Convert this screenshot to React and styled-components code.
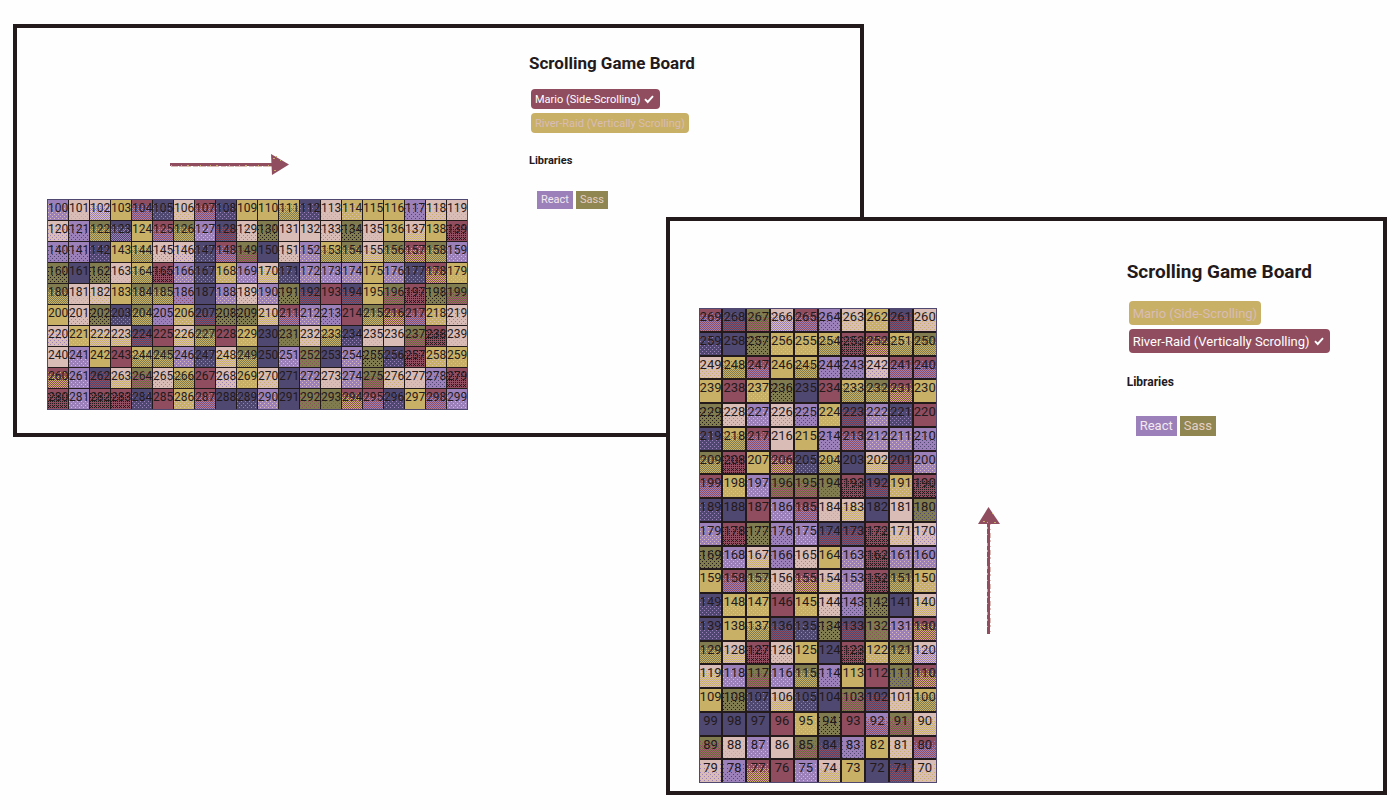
import React from "react";
import styled, { createGlobalStyle, css } from "styled-components";

const palette = {
  b: "#231a1c",
  n: "#4f4870",
  w: "#8f4d5f",
  o: "#817b50",
  g: "#c8b067",
  p: "#9b80ba",
  k: "#d9bcb6",
};

/* Each cell is a base colour and the colour of its grain; a capital means a dense grain. */
const sideTiles = [
  "pk kg kP g- wP np kg wP np g- g- gO np kg gk g- g- pn kg kg",
  "kp pn oG nP g- wP oG pk nW kp ob k- k- kp ob kg g- kG g- wB",
  "pn pn np g- gO kp kp np wP oW n- kp pk gO oG kG oG wG oG pk",
  "ob n- ob kg gO wB pk np gk pk kG np pk pk pk g- pk np wG gk",
  "oG kg kg g- oG oG pw n- pk kp pk ob nW w- nW g- oW wB ob oW",
  "g- kp ob np oG pw gk nW ob ob kG wP pk pn w- oG wG wP gk kp",
  "kp gk kG kG nW w- kG oG w- gk n- on kg gO np kg k- oW wB kg",
  "k- pk g- w- gO oG pk np kG oG n- pk ow n- pk ob np wB gk gk",
  "wG pk nW kG oW kp gO w- kp gk kg n- pk kg pk oW kg kg pn wB",
  "wB pk wB wB np w- gk wP n- np pk n- ow ow wG wP np g- wP pk",
];

const upTiles = [
  "wP nW oW kP wP pn kg gk nW kg",
  "np n- ob gk gk gO wB wG gO oG",
  "kg gO wP g- gO pn pn kp wP wP",
  "g- w- gk ob n- w- gO oG wG g-",
  "ob kp pk kp pn gk nW pk np w-",
  "np gO wP k- g- pn wP pk pk pn",
  "oG wB g- wG np gO n- kG nW pk",
  "wP gk pk oW oW on wB nW gk wB",
  "np n- w- pk wP kg kG n- k- on",
  "pk wB ob pn pk nW nW wB kg kp",
  "ob pk kG pn kp g- pk wB pk pk",
  "g- wP oG kp wG kG pk wB oG gk",
  "np gk gk w- gk kp pn ob n- kG",
  "np g- gO nW np ob nW ow pk wG",
  "oG kG wB kp g- n- wB gk oG kP",
  "kG pk oW pk oG pn g- w- on wG",
  "g- ob np kG np n- oW nW kg gO",
  "n- n- n- w- gk ob w- pW oW kG",
  "oW kg pk k- oW nW pn g- kg wP",
  "kp pn wG w- pk kG g- n- nW kg",
];

const parse = (rows, first, step) =>
  rows
    .join(" ")
    .split(" ")
    .map((code, i) => {
      const [base, grain] = code;
      return {
        number: first + i * step,
        base: palette[base],
        grain: palette[grain.toLowerCase()],
        dense: grain !== grain.toLowerCase(),
      };
    });

/* Ordered 4x4 dithering that thickens towards the foot of the cell. */
const bayer = [0, 8, 2, 10, 12, 4, 14, 6, 3, 11, 1, 9, 15, 7, 13, 5];

const grainPath = (density) => {
  let d = "";
  for (let y = 3; y < 23; y += 1) {
    const level = density * Math.min(1, y / 15);
    for (let x = 0; x < 23; x += 1) {
      if (bayer[(y % 4) * 4 + (x % 4)] + 0.5 < level * 16) d += `M${x} ${y}h1v1h-1z`;
    }
  }
  return d;
};

const sparsePath = grainPath(0.12);
const densePath = grainPath(0.48);
const shadePath = grainPath(0.32);

const GlobalStyle = createGlobalStyle`
  * { box-sizing: border-box; }
  body {
    margin: 0;
    background: #fefefe;
    color: ${palette.b};
    font-family: Roboto, "Liberation Sans", sans-serif;
  }
`;

const Page = styled.main`
  padding: 24px 13px 15px;
`;

const Panel = styled.section`
  display: flex;
  width: ${(p) => (p.$large ? "52.5%" : "61.9%")};
  padding: ${(p) => (p.$large ? "87px 28px 8px 29px" : "23px 28px 24px 31px")};
  margin: ${(p) => (p.$large ? "-220px 0 0 auto" : "0")};
  border: 4px solid ${palette.b};
  background: #fefefe;
`;

const SideStage = styled.div`
  display: flex;
  flex: none;
  flex-direction: column;
  gap: 24px;
  margin: 101px 62px 0 0;
`;

const UpStage = styled.div`
  display: flex;
  flex: none;
  align-items: center;
  gap: 40px;
  margin-right: 126px;
`;

const SideArrow = styled.svg`
  width: 120px;
  height: 24px;
  margin-left: 122px;
`;

const UpArrow = styled.svg`
  width: 24px;
  height: 128px;
  margin-top: 50px;
`;

const Board = styled.div`
  display: grid;
  background: ${palette.b};
  text-align: center;
  line-height: 16px;
  ${(p) =>
    p.$large
      ? css`
          grid-template-columns: repeat(10, 1fr);
          grid-auto-rows: 1fr;
          width: 238px;
          height: 475px;
          gap: 2px;
          border: 1px solid ${palette.n};
          font-size: 13px;
        `
      : css`
          grid-template-columns: repeat(20, 20px);
          grid-auto-rows: 20px;
          gap: 1px;
          width: 419px;
          outline: 1px solid ${palette.n};
          font-size: 12px;
        `}
`;

const Cell = styled.div`
  position: relative;
  min-width: 0;
  min-height: 0;
  background: ${(p) => p.$base};
`;

const Grain = styled.svg`
  position: absolute;
  inset: 0;
  width: 100%;
  height: 100%;
  overflow: hidden;
`;

const Number = styled.span`
  position: relative;
  display: flex;
  justify-content: center;
`;

const Info = styled.div`
  display: flex;
  flex-direction: column;
  align-items: flex-start;
  min-width: 0;
  white-space: nowrap;
  margin-top: ${(p) => (p.$large ? "-48px" : "0")};
`;

const Title = styled.h1`
  margin: 0;
  font-size: ${(p) => (p.$large ? "19px" : "17px")};
  line-height: 24px;
  font-weight: 700;
`;

const Options = styled.div`
  display: flex;
  flex-direction: column;
  align-items: flex-start;
  gap: 4px;
  margin: ${(p) => (p.$large ? "17px 0 0 2px" : "14px 0 0 2px")};
`;

const Option = styled.button`
  display: flex;
  align-items: center;
  gap: 4px;
  height: ${(p) => (p.$large ? "24px" : "20px")};
  padding: 0 ${(p) => (p.$active ? "6px" : "4px")} 0 4px;
  border: 0;
  border-radius: 4px;
  background: ${(p) => (p.$active ? palette.w : palette.g)};
  color: ${(p) => (p.$active ? "#fefefe" : palette.k)};
  font-family: inherit;
  font-size: ${(p) => (p.$large ? "13px" : "11px")};
`;

const Check = styled.svg`
  width: 10px;
  height: 10px;
`;

const Subtitle = styled.h2`
  margin: ${(p) => (p.$large ? "21px 0 0" : "20px 0 0")};
  font-size: ${(p) => (p.$large ? "12px" : "11px")};
  line-height: 16px;
  font-weight: 700;
`;

const Tags = styled.div`
  display: flex;
  gap: 3px;
  margin: ${(p) => (p.$large ? "26px 0 0 9px" : "22px 0 0 8px")};
`;

const Tag = styled.span`
  padding: 0 4px;
  background: ${(p) => p.$color};
  color: ${(p) => p.$ink};
  font-size: ${(p) => (p.$large ? "13px" : "11px")};
  line-height: ${(p) => (p.$large ? "20px" : "18px")};
`;

function Tiles({ tiles, large }) {
  return (
    <Board $large={large}>
      {tiles.map((t) => (
        <Cell key={t.number} $base={t.base}>
          {t.grain && (
            <Grain aria-hidden="true" shapeRendering="crispEdges">
              <path
                fill={t.grain}
                d={!t.dense ? sparsePath : t.grain === palette.b ? shadePath : densePath}
              />
            </Grain>
          )}
          <Number>{t.number}</Number>
        </Cell>
      ))}
    </Board>
  );
}

function Choice({ large, active, children }) {
  return (
    <Option type="button" $large={large} $active={active} aria-pressed={active}>
      {children}
      {active && (
        <Check viewBox="0 0 10 10" aria-hidden="true">
          <path d="M1 5.2 3.7 8 9 2.2" fill="none" stroke="#fefefe" strokeWidth="1.9" />
        </Check>
      )}
    </Option>
  );
}

function Details({ large, selected }) {
  return (
    <Info $large={large}>
      <Title $large={large}>Scrolling Game Board</Title>
      <Options $large={large}>
        <Choice large={large} active={selected === "mario"}>Mario (Side-Scrolling)</Choice>
        <Choice large={large} active={selected === "river"}>River-Raid (Vertically Scrolling)</Choice>
      </Options>
      <Subtitle $large={large}>Libraries</Subtitle>
      <Tags $large={large}>
        <Tag $large={large} $color={palette.p} $ink="#f3eaf0">React</Tag>
        <Tag $large={large} $color="#8f8651" $ink="#e6cfc4">Sass</Tag>
      </Tags>
    </Info>
  );
}

export default function App() {
  return (
    <>
      <GlobalStyle />
      <Page>
        <Panel>
          <SideStage>
            <SideArrow viewBox="0 0 120 24" aria-hidden="true">
              <path d="M1 14.5H102" stroke={palette.k} strokeWidth="1" strokeDasharray="7 1 12 2 5 1" />
              <path d="M0 12.5H102" stroke={palette.w} strokeWidth="3" />
              <path d="M1 13.5H102" stroke={palette.g} strokeWidth="1" strokeDasharray="1 9 1 5 2 11" />
              <path d="M101 2 119 12.5 102 23Z" fill={palette.w} />
              <path d="M103 6.5h2M106 4.5h1M104 18.5h2M110 8.5h1" stroke={palette.g} />
            </SideArrow>
            <Tiles tiles={parse(sideTiles, 100, 1)} />
          </SideStage>
          <Details selected="mario" />
        </Panel>
        <Panel $large>
          <UpStage>
            <Tiles tiles={parse(upTiles, 269, -1)} large />
            <UpArrow viewBox="0 0 24 128" aria-hidden="true">
              <path d="M13.5 16V127" stroke={palette.k} strokeWidth="1" strokeDasharray="2 4 1 3 5 2" />
              <path d="M11.5 16V127" stroke={palette.w} strokeWidth="3" />
              <path d="M10.5 20V127" stroke={palette.g} strokeWidth="1" strokeDasharray="2 5 1 8 3 4" />
              <path d="M11.5 0 23 17 1 17Z" fill={palette.w} />
              <path d="M6 14.5h2M10 15.5h1M15 6.5h1M17 15.5h2" stroke={palette.g} />
            </UpArrow>
          </UpStage>
          <Details large selected="river" />
        </Panel>
      </Page>
    </>
  );
}
